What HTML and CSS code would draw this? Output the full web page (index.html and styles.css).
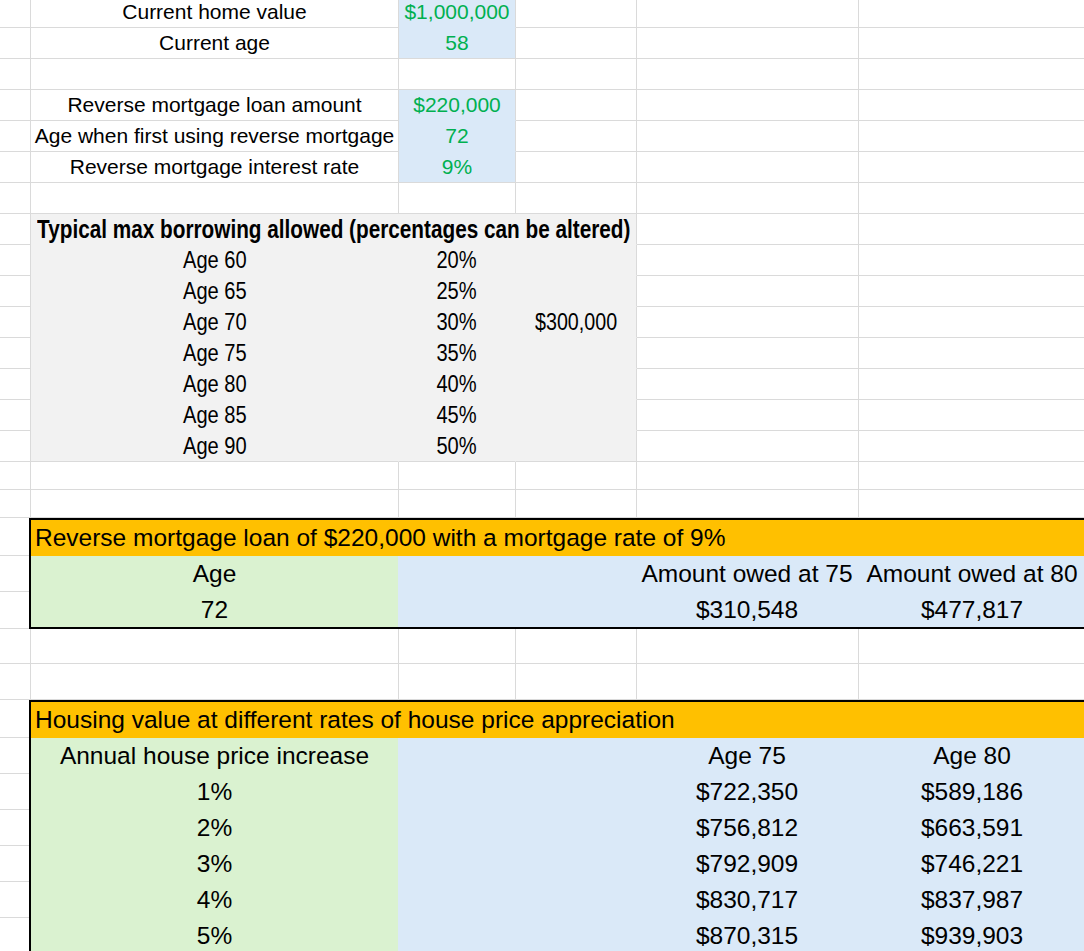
FILE: index.html
```html
<!DOCTYPE html>
<html>
<head>
<meta charset="utf-8">
<link rel="stylesheet" href="styles.css">
</head>
<body>
<div class="sheet">
  <div class="row">
    <div class="c"></div><div class="c lbl">Current home value</div><div class="c blue val">$1,000,000</div><div class="c"></div><div class="c"></div><div class="c"></div>
  </div>
  <div class="row">
    <div class="c"></div><div class="c lbl">Current age</div><div class="c blue blue-last val">58</div><div class="c"></div><div class="c"></div><div class="c"></div>
  </div>
  <div class="row">
    <div class="c"></div><div class="c"></div><div class="c"></div><div class="c"></div><div class="c"></div><div class="c"></div>
  </div>
  <div class="row">
    <div class="c"></div><div class="c lbl">Reverse mortgage loan amount</div><div class="c blue val">$220,000</div><div class="c"></div><div class="c"></div><div class="c"></div>
  </div>
  <div class="row">
    <div class="c"></div><div class="c lbl">Age when first using reverse mortgage</div><div class="c blue val">72</div><div class="c"></div><div class="c"></div><div class="c"></div>
  </div>
  <div class="row">
    <div class="c"></div><div class="c lbl">Reverse mortgage interest rate</div><div class="c blue blue-last val">9%</div><div class="c"></div><div class="c"></div><div class="c"></div>
  </div>
  <div class="row">
    <div class="c"></div><div class="c"></div><div class="c"></div><div class="c"></div><div class="c"></div><div class="c"></div>
  </div>
  <div class="row">
    <div class="c"></div><div class="c gray gray-span"><span class="narrow bold">Typical max borrowing allowed (percentages can be altered)</span></div><div class="c"></div><div class="c"></div>
  </div>
  <div class="row">
    <div class="c"></div><div class="c gray"><span class="narrow">Age 60</span></div><div class="c gray"><span class="narrow">20%</span></div><div class="c gray gray-end"></div><div class="c"></div><div class="c"></div>
  </div>
  <div class="row">
    <div class="c"></div><div class="c gray"><span class="narrow">Age 65</span></div><div class="c gray"><span class="narrow">25%</span></div><div class="c gray gray-end"></div><div class="c"></div><div class="c"></div>
  </div>
  <div class="row">
    <div class="c"></div><div class="c gray"><span class="narrow">Age 70</span></div><div class="c gray"><span class="narrow">30%</span></div><div class="c gray gray-end"><span class="narrow small">$300,000</span></div><div class="c"></div><div class="c"></div>
  </div>
  <div class="row">
    <div class="c"></div><div class="c gray"><span class="narrow">Age 75</span></div><div class="c gray"><span class="narrow">35%</span></div><div class="c gray gray-end"></div><div class="c"></div><div class="c"></div>
  </div>
  <div class="row">
    <div class="c"></div><div class="c gray"><span class="narrow">Age 80</span></div><div class="c gray"><span class="narrow">40%</span></div><div class="c gray gray-end"></div><div class="c"></div><div class="c"></div>
  </div>
  <div class="row">
    <div class="c"></div><div class="c gray"><span class="narrow">Age 85</span></div><div class="c gray"><span class="narrow">45%</span></div><div class="c gray gray-end"></div><div class="c"></div><div class="c"></div>
  </div>
  <div class="row">
    <div class="c"></div><div class="c gray gray-last"><span class="narrow">Age 90</span></div><div class="c gray gray-last"><span class="narrow">50%</span></div><div class="c gray gray-end gray-last"></div><div class="c"></div><div class="c"></div>
  </div>
  <div class="row row-short">
    <div class="c"></div><div class="c"></div><div class="c"></div><div class="c"></div><div class="c"></div><div class="c"></div>
  </div>
  <div class="row row-short">
    <div class="c"></div><div class="c"></div><div class="c"></div><div class="c"></div><div class="c"></div><div class="c"></div>
  </div>

  <div class="boxwrap">
    <div class="gutter">
      <div class="gc gc-first"></div>
      <div class="gc"></div>
      <div class="gc gc-last"></div>
    </div>
    <div class="box">
      <div class="brow title">Reverse mortgage loan of $220,000 with a mortgage rate of 9%</div>
      <div class="brow">
        <div class="bc green">Age</div><div class="bc blue2"></div><div class="bc blue2"></div><div class="bc blue2">Amount owed at 75</div><div class="bc blue2">Amount owed at 80</div>
      </div>
      <div class="brow brow-last">
        <div class="bc green">72</div><div class="bc blue2"></div><div class="bc blue2"></div><div class="bc blue2">$310,548</div><div class="bc blue2">$477,817</div>
      </div>
    </div>
  </div>

  <div class="row row-35">
    <div class="c"></div><div class="c"></div><div class="c"></div><div class="c"></div><div class="c"></div><div class="c"></div>
  </div>
  <div class="row row-36">
    <div class="c"></div><div class="c"></div><div class="c"></div><div class="c"></div><div class="c"></div><div class="c"></div>
  </div>

  <div class="boxwrap">
    <div class="gutter">
      <div class="gc gc-first"></div>
      <div class="gc"></div>
      <div class="gc"></div>
      <div class="gc"></div>
      <div class="gc"></div>
      <div class="gc"></div>
      <div class="gc"></div>
    </div>
    <div class="box box-open">
      <div class="brow title">Housing value at different rates of house price appreciation</div>
      <div class="brow">
        <div class="bc green">Annual house price increase</div><div class="bc blue2"></div><div class="bc blue2"></div><div class="bc blue2">Age 75</div><div class="bc blue2">Age 80</div>
      </div>
      <div class="brow">
        <div class="bc green">1%</div><div class="bc blue2"></div><div class="bc blue2"></div><div class="bc blue2">$722,350</div><div class="bc blue2">$589,186</div>
      </div>
      <div class="brow">
        <div class="bc green">2%</div><div class="bc blue2"></div><div class="bc blue2"></div><div class="bc blue2">$756,812</div><div class="bc blue2">$663,591</div>
      </div>
      <div class="brow">
        <div class="bc green">3%</div><div class="bc blue2"></div><div class="bc blue2"></div><div class="bc blue2">$792,909</div><div class="bc blue2">$746,221</div>
      </div>
      <div class="brow">
        <div class="bc green">4%</div><div class="bc blue2"></div><div class="bc blue2"></div><div class="bc blue2">$830,717</div><div class="bc blue2">$837,987</div>
      </div>
      <div class="brow">
        <div class="bc green">5%</div><div class="bc blue2"></div><div class="bc blue2"></div><div class="bc blue2">$870,315</div><div class="bc blue2">$939,903</div>
      </div>
    </div>
  </div>
</div>
</body>
</html>
```

FILE: styles.css
```css
html, body {
  margin: 0;
  padding: 0;
  background: #ffffff;
}
body {
  width: 1084px;
  height: 951px;
  overflow: hidden;
  font-family: "Liberation Sans", Arial, sans-serif;
  color: #000000;
}
.sheet {
  margin-top: -3px;
  width: 1087px;
}
.row {
  display: grid;
  grid-template-columns: 31px 368px 117px 121px 222px 228px;
  height: 31px;
}
.row-short { height: 28px; }
.row-35 { height: 35px; }
.row-36 { height: 36px; }
.c {
  box-sizing: border-box;
  border-right: 1px solid #dadada;
  border-bottom: 1px solid #dadada;
  display: flex;
  align-items: center;
  justify-content: center;
  white-space: nowrap;
  font-size: 21px;
}
.blue {
  background: #dae9f8;
  border-bottom-color: #dae9f8;
}
.blue-last { border-bottom-color: #dadada; }
.val {
  color: #00b050;
}
.gray {
  background: #f2f2f2;
  border-bottom-color: #f2f2f2;
  border-right-color: #f2f2f2;
}
.gray-span {
  grid-column: span 3;
  border-right-color: #dadada;
}
.gray-end { border-right-color: #dadada; }
.gray-last { border-bottom-color: #dadada; }
.narrow {
  display: inline-block;
  font-size: 24.5px;
  transform: scaleX(0.82);
  transform-origin: center center;
}
.narrow.small { font-size: 24px; }
.narrow.bold { font-weight: bold; font-size: 25.3px; }

.boxwrap {
  display: grid;
  grid-template-columns: 29px 1fr;
}
.gutter {
  display: flex;
  flex-direction: column;
}
.gc {
  box-sizing: border-box;
  height: 36px;
  border-bottom: 1px solid #dadada;
}
.gc-first { height: 38px; }
.gc-last { height: 37px; }
.box {
  border: 2px solid #000000;
  border-right: none;
}
.box-open { border-bottom: none; }
.brow {
  display: grid;
  grid-template-columns: 367px 117px 121px 222px 228px;
  height: 36px;
  font-size: 24.5px;
}
.brow-last { height: 35px; }
.title {
  display: flex;
  align-items: center;
  background: #ffc000;
  padding-left: 4px;
  white-space: nowrap;
}
.bc {
  display: flex;
  align-items: center;
  justify-content: center;
  white-space: nowrap;
}
.green { background: #daf2d0; }
.blue2 { background: #dae9f8; }
```
